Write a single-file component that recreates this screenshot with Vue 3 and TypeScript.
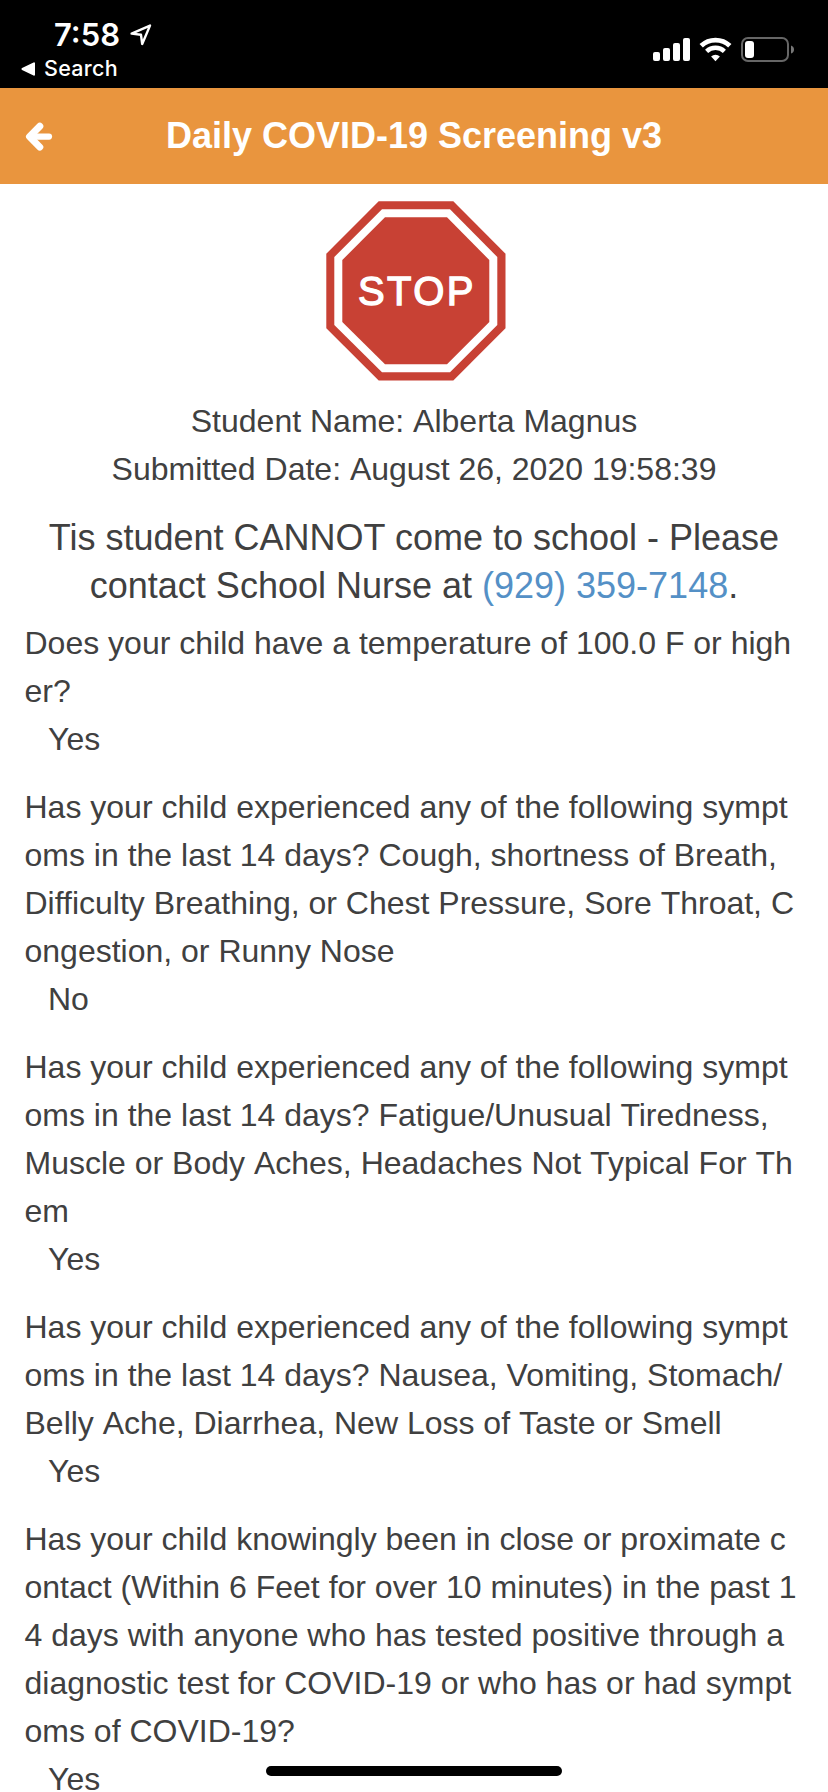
<script setup lang="ts">
interface Entry {
  question: string
  answer: string
}

const entries: Entry[] = [
  {
    question: 'Does your child have a temperature of 100.0 F or high\ner?',
    answer: 'Yes',
  },
  {
    question:
      'Has your child experienced any of the following sympt\noms in the last 14 days? Cough, shortness of Breath,\nDifficulty Breathing, or Chest Pressure, Sore Throat, C\nongestion, or Runny Nose',
    answer: 'No',
  },
  {
    question:
      'Has your child experienced any of the following sympt\noms in the last 14 days? Fatigue/Unusual Tiredness,\nMuscle or Body Aches, Headaches Not Typical For Th\nem',
    answer: 'Yes',
  },
  {
    question:
      'Has your child experienced any of the following sympt\noms in the last 14 days? Nausea, Vomiting, Stomach/\nBelly Ache, Diarrhea, New Loss of Taste or Smell',
    answer: 'Yes',
  },
  {
    question:
      'Has your child knowingly been in close or proximate c\nontact (Within 6 Feet for over 10 minutes) in the past 1\n4 days with anyone who has tested positive through a\ndiagnostic test for COVID-19 or who has or had sympt\noms of COVID-19?',
    answer: 'Yes',
  },
]

// Keeps the space before a capital A, T or Y from being kerned tighter.
const loosen = (text: string): string => text.replace(/ (?=[ATY])/g, ' \u200c')

const summary: string[] = ['Student Name: Alberta Magnus', 'Submitted Date: August 26, 2020 19:58:39']
</script>

<template>
  <div class="screen">
    <div class="status">
      <div class="status-left">
        <div class="clock">
          <span class="time">7:58</span>
          <svg class="location" width="22" height="22" viewBox="0 0 22 22">
            <path d="M1.6 9.6 20 1.6 12.2 20 11 10.8Z" />
          </svg>
        </div>
        <div class="back-app">
          <svg width="15" height="14" viewBox="0 0 15 14">
            <path d="M1.5 7 13 1.3V12.7Z" fill="#fff" stroke="#fff" stroke-width="2" stroke-linejoin="round" />
          </svg>
          <span class="search">Search</span>
        </div>
      </div>
      <div class="status-right">
        <svg width="142" height="26" viewBox="0 0 142 26">
          <g fill="#fff">
            <rect x="0" y="15" width="7" height="9" rx="2" />
            <rect x="10" y="11" width="7" height="13" rx="2" />
            <rect x="20" y="6" width="7" height="18" rx="2" />
            <rect x="30" y="1" width="7" height="23" rx="2" />
            <path d="M62.5 24.2 58.1 19.5A6.2 6.2 0 0 1 66.9 19.5Z" />
          </g>
          <g fill="none" stroke="#fff">
            <path d="M48.2 8.8A20.6 20.6 0 0 1 76.8 8.8" stroke-width="4.8" />
            <path d="M53.6 14.4A12.8 12.8 0 0 1 71.4 14.4" stroke-width="4.4" />
          </g>
          <rect x="89" y="1" width="46" height="23" rx="6" fill="none" stroke="#666" stroke-width="2" />
          <rect x="92" y="4" width="9" height="17" rx="3" fill="#fff" />
          <path d="M138 8.5Q141 9.5 141 12.5T138 16.5Z" fill="#777" />
        </svg>
      </div>
    </div>

    <header class="bar">
      <svg class="back" width="28" height="30" viewBox="0 0 28 30">
        <path d="M14.8 5.2 4.5 15.6 14.8 26.1" stroke-width="7" />
        <path d="M6 15.6H24" stroke-width="6.2" />
      </svg>
      <h1>Daily COVID-19 Screening v3</h1>
    </header>

    <main>
      <svg class="sign" width="180" height="180" viewBox="0 0 180 180">
        <polygon points="52.7,0.3 127.3,0.3 179.5,52.7 179.5,127.3 127.3,179.5 52.7,179.5 0.3,127.3 0.3,52.7" fill="#c84134" />
        <polygon points="56,8.3 124,8.3 171.3,56 171.3,124 124,171.3 56,171.3 8.3,124 8.3,56" fill="#fff" />
        <polygon points="59,16.3 121,16.3 163.3,59 163.3,121 121,163.3 59,163.3 16.3,121 16.3,59" fill="#c84134" />
        <text x="32" y="104.2">STOP</text>
      </svg>

      <section class="summary">
        <div v-for="line in summary" :key="line">{{ loosen(line) }}</div>
      </section>

      <p class="verdict">
        Tis student CANNOT come to school - Please<br />contact School Nurse at
        <a>(929) 359-7148</a>.
      </p>

      <section v-for="(entry, i) in entries" :key="i" class="entry">
        <div class="question">{{ loosen(entry.question) }}</div>
        <div class="answer">{{ entry.answer }}</div>
      </section>
    </main>

    <div class="home-indicator"></div>
  </div>
</template>

<style>
body {
  margin: 0;
  overflow: hidden;
}
</style>

<style scoped>
.screen {
  position: relative;
  width: 828px;
  height: 1792px;
  overflow: hidden;
  background: #fff;
  color: #404040;
  font-family: 'Liberation Sans', Arial, sans-serif;
  font-size: 32px;
  line-height: 48px;
}

.status {
  box-sizing: border-box;
  display: flex;
  justify-content: space-between;
  height: 88px;
  padding: 15px 33px 0 21px;
  background: #000;
  color: #fff;
  font-family: Inter, sans-serif;
}

.clock {
  display: flex;
  align-items: center;
  height: 40px;
  padding-left: 33px;
}

.time {
  width: 76px;
  font-size: 31px;
  font-weight: 600;
}

.location {
  fill: none;
  stroke: #fff;
  stroke-width: 2.4;
  stroke-linejoin: round;
}

.back-app {
  display: flex;
  align-items: center;
  height: 27px;
}

.search {
  margin-left: 8px;
  font-size: 21.5px;
  font-weight: 500;
  letter-spacing: 0.3px;
  line-height: 27px;
}

.status-right {
  display: flex;
  padding: 22px 0 0;
}

.bar {
  display: flex;
  align-items: center;
  height: 96px;
  padding: 0 25px;
  background: #e9953e;
  color: #fff;
}

.back {
  fill: none;
  stroke: #fff;
  stroke-linecap: round;
  stroke-linejoin: round;
}

h1 {
  flex: 1;
  margin: 0 28px 0 0;
  font-size: 36px;
  line-height: 48px;
  font-weight: 700;
  text-align: center;
}

main {
  display: flex;
  flex-direction: column;
  padding: 17px 24px 0;
}

.sign {
  align-self: center;
  margin-left: 3px;
}

.sign text {
  fill: #fff;
  stroke: #fff;
  stroke-width: 1.3px;
  font-size: 40px;
  letter-spacing: 2.4px;
}

.summary {
  margin-top: 16px;
  text-align: center;
  white-space: pre;
}

.verdict {
  margin: 21px 0 9px;
  font-size: 36px;
  text-align: center;
}

.verdict a {
  color: #5490c6;
}

.entry {
  margin: 0 0 20px 0.5px;
}

.question {
  white-space: pre;
}

.answer {
  padding-left: 23.5px;
}

.home-indicator {
  position: absolute;
  left: 266px;
  bottom: 16px;
  width: 296px;
  height: 10px;
  border-radius: 5px;
  background: #000;
}
</style>
